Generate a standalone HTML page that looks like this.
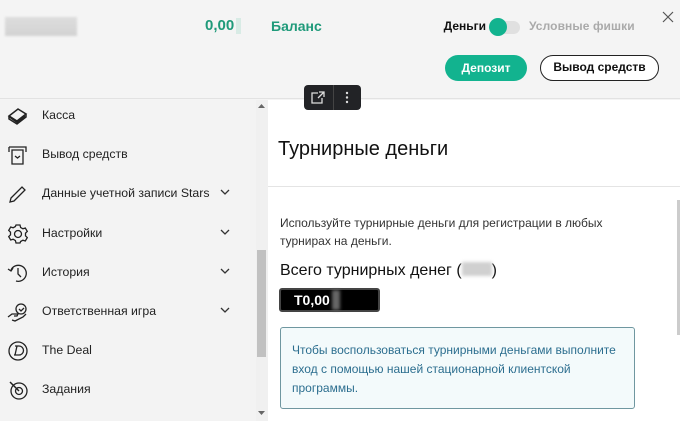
<!DOCTYPE html>
<html><head><meta charset="utf-8"><style>
*{margin:0;padding:0;box-sizing:border-box}
body{width:680px;height:421px;overflow:hidden;background:#f4f4f4;font-family:"Liberation Sans",Arial,sans-serif;position:relative;color:#222}
.a{position:absolute}
.hdr{left:0;top:0;width:680px;height:99px;background:#f4f4f4;border-bottom:1px solid #e2e2e2}
.side{left:0;top:100px;width:256px;height:321px;background:#f3f3f3}
.sb{left:256px;top:100px;width:12px;height:321px;background:#f0f0f0}
.main{left:268px;top:100px;width:412px;height:321px;background:#fff}
.item{position:absolute;left:0;width:256px;height:39px;font-size:12.3px;color:#222}
.item span{position:absolute;left:42px;top:8px}
.item svg{position:absolute;left:7px;top:5px}
.item svg.chev{left:220px;top:10px}
</style></head><body>
<div class="a hdr"></div>
<div class="a" style="left:5px;top:17px;width:72px;height:19px;background:linear-gradient(#ddd,#d3d3d3);filter:blur(1px)"></div>
<div class="a" style="left:205px;top:17px;font-size:15px;font-weight:bold;color:#1f9a7a">0,00</div>
<div class="a" style="left:236px;top:18px;width:5px;height:16px;background:#d8ebe5"></div>
<div class="a" style="left:271px;top:18px;font-size:14px;font-weight:bold;color:#1f9a7a">Баланс</div>
<div class="a" style="right:194px;top:19px;font-size:12px;font-weight:bold;color:#111">Деньги</div>
<div class="a" style="left:492px;top:21px;width:28px;height:13px;border-radius:7px;background:#e0e0e0"></div>
<div class="a" style="left:489px;top:18px;width:18px;height:18px;border-radius:50%;background:#12b38f"></div>
<div class="a" style="left:529px;top:19px;font-size:12px;font-weight:bold;color:#aaa;letter-spacing:0.1px">Условные фишки</div>
<svg class="a" style="left:662px;top:11px" width="12" height="12"><path d="M1 1L11 11M11 1L1 11" stroke="#555" stroke-width="1.2"/></svg>
<div class="a" style="left:445px;top:55px;width:82px;height:26px;border-radius:13px;background:#12b38f;color:#fff;font-size:12px;font-weight:bold;text-align:center;line-height:26px">Депозит</div>
<div class="a" style="left:540px;top:55px;width:119px;height:26px;border-radius:13px;border:1.5px solid #222;background:#fff;color:#111;font-size:12px;font-weight:bold;text-align:center;line-height:23px">Вывод средств</div>

<div class="a side">
<div class="item" style="top:0"><svg width="22" height="20" viewBox="0 0 22 20"><path d="M2 11l9-7 8 5-9 7z M2 11v3l8 5 9-7v-3" fill="none" stroke="#222" stroke-width="1.5"/><path d="M3 12l7 5 8-6" stroke="#222" stroke-width="2" fill="none"/></svg><span>Касса</span></div>
<div class="item" style="top:39px"><svg width="22" height="22" viewBox="0 0 22 22"><path d="M2 3h17v5M2 3v5M5 6h11v14H5z M8 12l2.5 2 2.5-2" fill="none" stroke="#222" stroke-width="1.3"/></svg><span>Вывод средств</span></div>
<div class="item" style="top:78px"><svg width="22" height="22" viewBox="0 0 22 22"><path d="M3 19l1-4L15 4l3 3L7 18z" fill="none" stroke="#222" stroke-width="1.3"/></svg><span>Данные учетной записи Stars</span><svg class="chev" width="10" height="8"><path d="M1 2l4 4 4-4" fill="none" stroke="#333" stroke-width="1.3"/></svg></div>
<div class="item" style="top:118px"><svg width="22" height="22" viewBox="0 0 22 22"><circle cx="11" cy="11" r="3.5" fill="none" stroke="#222" stroke-width="1.3"/><path d="M9 2h4l.6 2.5 2.3 1.3 2.4-.8 2 3.4-1.8 1.8v2.6l1.8 1.8-2 3.4-2.4-.8-2.3 1.3L13 20H9l-.6-2.5-2.3-1.3-2.4.8-2-3.4 1.8-1.8V9.2L1.7 7.4l2-3.4 2.4.8 2.3-1.3z" fill="none" stroke="#222" stroke-width="1.3"/></svg><span>Настройки</span><svg class="chev" width="10" height="8"><path d="M1 2l4 4 4-4" fill="none" stroke="#333" stroke-width="1.3"/></svg></div>
<div class="item" style="top:157px"><svg width="22" height="22" viewBox="0 0 22 22"><path d="M4 8A8 8 0 1 1 9 19" fill="none" stroke="#222" stroke-width="1.3"/><path d="M1 7l3 2 2-3M11 6v6l3 3" fill="none" stroke="#222" stroke-width="1.3"/></svg><span>История</span><svg class="chev" width="10" height="8"><path d="M1 2l4 4 4-4" fill="none" stroke="#333" stroke-width="1.3"/></svg></div>
<div class="item" style="top:196px"><svg width="22" height="22" viewBox="0 0 22 22"><circle cx="14" cy="8" r="5" fill="none" stroke="#222" stroke-width="1.3"/><path d="M12 8l2 2 3-3M1 16l4-3h6l-1 2H7M5 19l3 1 8-4 3-3" fill="none" stroke="#222" stroke-width="1.3"/></svg><span>Ответственная игра</span><svg class="chev" width="10" height="8"><path d="M1 2l4 4 4-4" fill="none" stroke="#333" stroke-width="1.3"/></svg></div>
<div class="item" style="top:235px"><svg width="22" height="22" viewBox="0 0 22 22"><circle cx="11" cy="11" r="9" fill="none" stroke="#222" stroke-width="1.3"/><path d="M8 6h4a4 4 0 0 1 0 9H7M10 6l-2 9" fill="none" stroke="#222" stroke-width="1.3"/></svg><span>The Deal</span></div>
<div class="item" style="top:274px"><svg width="22" height="22" viewBox="0 0 22 22"><circle cx="12" cy="12" r="8" fill="none" stroke="#222" stroke-width="1.3"/><circle cx="12" cy="12" r="3.5" fill="none" stroke="#222" stroke-width="1.3"/><path d="M3 3l9 9" stroke="#222" stroke-width="1.5"/></svg><span>Задания</span></div>
</div>
<div class="a sb"></div>
<div class="a" style="left:257px;top:250px;width:9px;height:107px;background:#c1c1c1"></div>
<svg class="a" style="left:258px;top:104px" width="7" height="5"><path d="M0 4L3.5 0 7 4z" fill="#666"/></svg>
<svg class="a" style="left:258px;top:411px" width="7" height="5"><path d="M0 0L3.5 4 7 0z" fill="#666"/></svg>

<div class="a main"></div>
<div class="a" style="left:268px;top:186px;width:412px;height:1px;background:#e4e4e4"></div>
<div class="a" style="left:677px;top:200px;width:3px;height:135px;background:#ccc"></div>
<div class="a" style="left:278px;top:138px;font-size:20px;color:#111">Турнирные деньги</div>
<div class="a" style="left:280px;top:214px;font-size:12px;line-height:18px;color:#333;width:360px">Используйте турнирные деньги для регистрации в любых турнирах на деньги.</div>
<div class="a" style="left:280px;top:262px;font-size:16px;color:#111">Всего турнирных денег (<span style="display:inline-block;width:30px;height:14px;background:#d0d0d0;filter:blur(1.5px);vertical-align:-1px"></span>)</div>
<div class="a" style="left:279px;top:288px;width:101px;height:24px;background:#000;border:2px solid #444;border-radius:3px;color:#fff;font-size:14px;font-weight:bold;line-height:20px;padding-left:13px">T0,00</div>
<div class="a" style="left:332px;top:290px;width:8px;height:20px;background:#666;filter:blur(1.5px)"></div>
<div class="a" style="left:280px;top:327px;width:355px;height:82px;background:#f3fafb;border:1px solid #6f97a0;border-radius:3px;color:#2c6e8f;font-size:12px;line-height:19px;padding:13px 0 0 11px">Чтобы воспользоваться турнирными деньгами выполните вход с помощью нашей стационарной клиентской программы.</div>

<div class="a" style="left:304px;top:85px;width:57px;height:25px;background:#222326;border-radius:4px"></div>
<div class="a" style="left:333px;top:85px;width:1px;height:25px;background:#444"></div>
<svg class="a" style="left:311px;top:91px" width="14" height="13"><path d="M7 2H1v10h10V7M8 1h5v5M13 1L7 7" fill="none" stroke="#ddd" stroke-width="1.3"/></svg>
<svg class="a" style="left:345px;top:91px" width="4" height="13"><circle cx="2" cy="2" r="1.2" fill="#ddd"/><circle cx="2" cy="6.5" r="1.2" fill="#ddd"/><circle cx="2" cy="11" r="1.2" fill="#ddd"/></svg>
</body></html>
